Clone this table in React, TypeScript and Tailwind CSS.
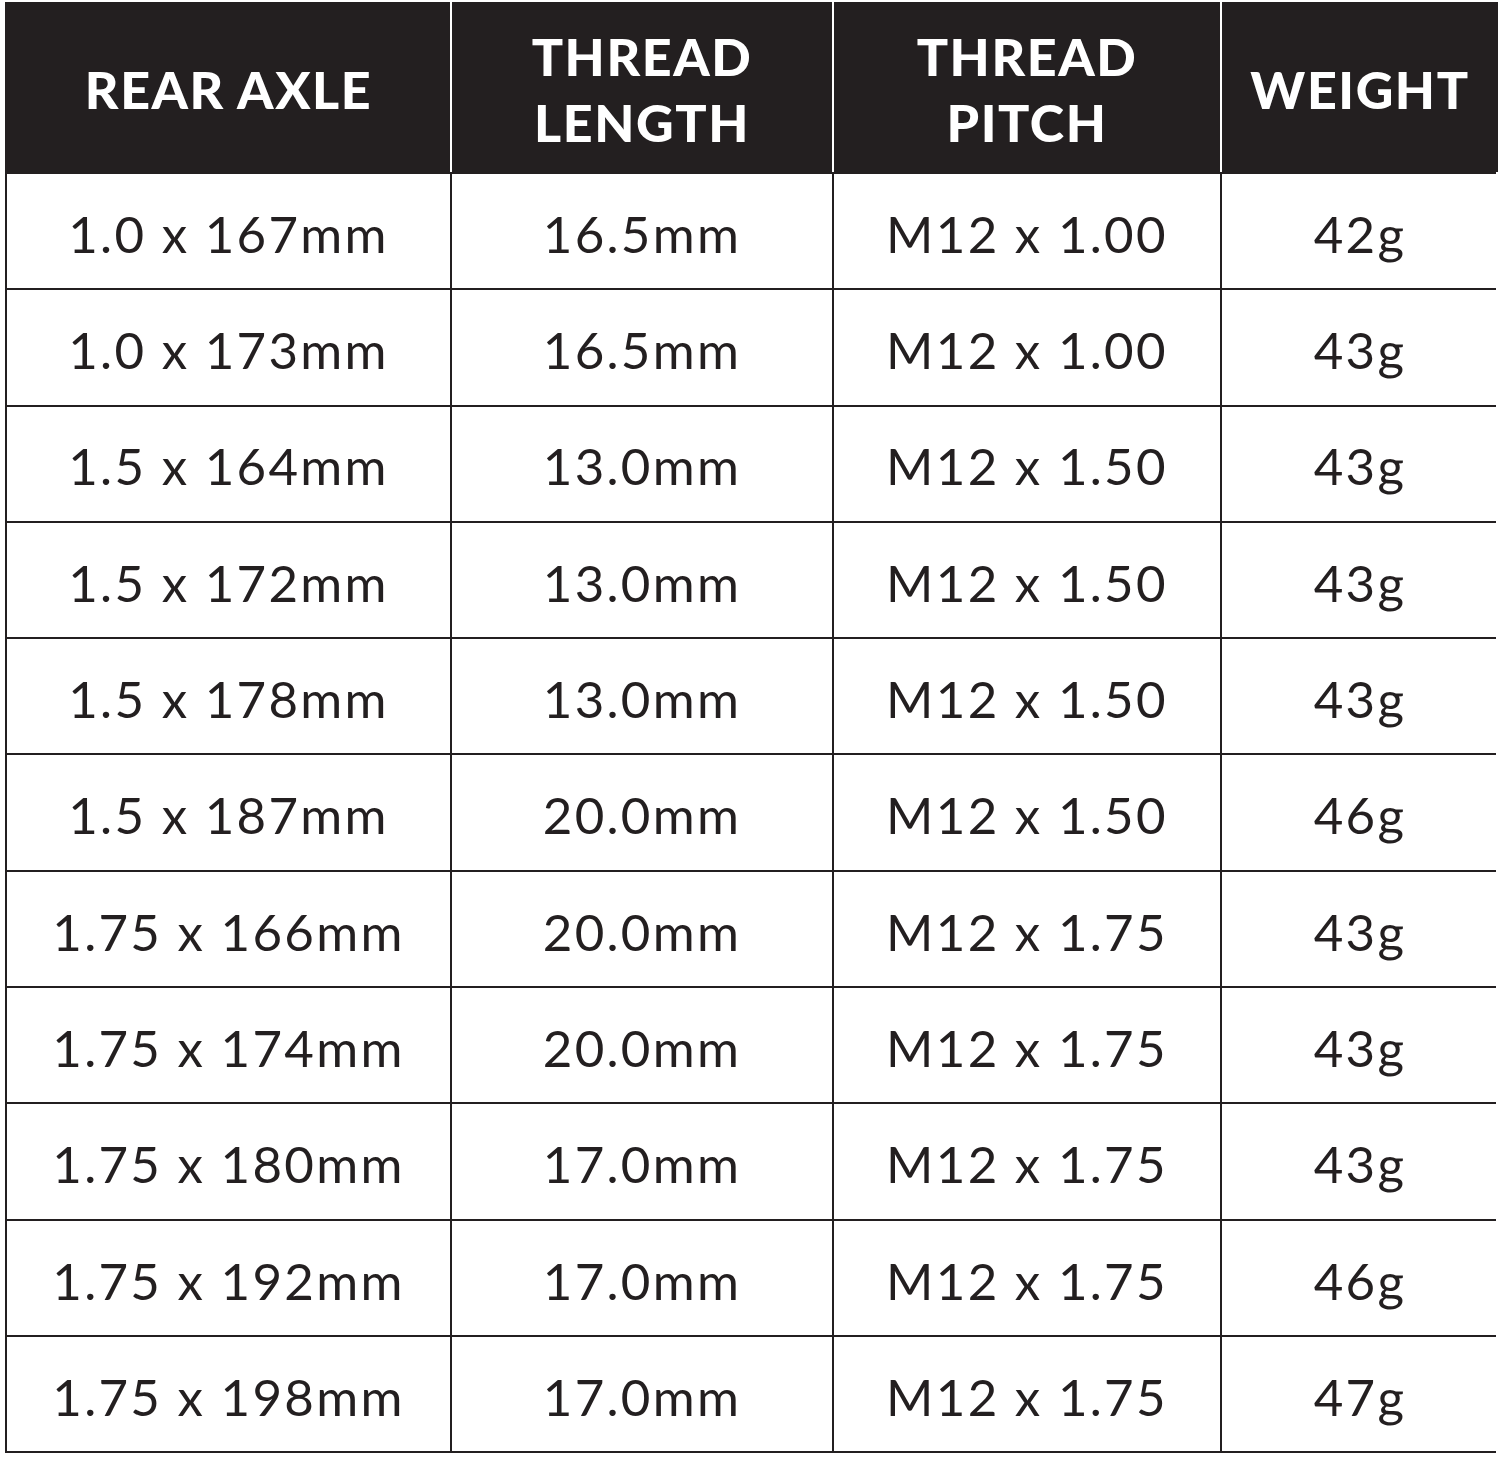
const rows = [
  ["1.0 x 167mm", "16.5mm", "M12 x 1.00", "42g"],
  ["1.0 x 173mm", "16.5mm", "M12 x 1.00", "43g"],
  ["1.5 x 164mm", "13.0mm", "M12 x 1.50", "43g"],
  ["1.5 x 172mm", "13.0mm", "M12 x 1.50", "43g"],
  ["1.5 x 178mm", "13.0mm", "M12 x 1.50", "43g"],
  ["1.5 x 187mm", "20.0mm", "M12 x 1.50", "46g"],
  ["1.75 x 166mm", "20.0mm", "M12 x 1.75", "43g"],
  ["1.75 x 174mm", "20.0mm", "M12 x 1.75", "43g"],
  ["1.75 x 180mm", "17.0mm", "M12 x 1.75", "43g"],
  ["1.75 x 192mm", "17.0mm", "M12 x 1.75", "46g"],
  ["1.75 x 198mm", "17.0mm", "M12 x 1.75", "47g"],
];

const headers = [["REAR AXLE"], ["THREAD", "LENGTH"], ["THREAD", "PITCH"], ["WEIGHT"]];

export default function App() {
  return (
    <div className="w-[1500px] h-[1458px] bg-white pt-[2px] pl-[5px] font-['Lato',sans-serif]">
      <div className="w-[1491px] border-2 border-t-0 border-[#231f20] bg-[#231f20]">
        {/* Header */}
        <div className="grid grid-cols-[443px_380px_386px_276px] gap-x-[2px] bg-white h-[170px]">
          {headers.map((lines, i) => (
            <div
              key={i}
              className="bg-[#231f20] flex flex-col items-center justify-center text-white font-black text-[52px] leading-[66px] tracking-[0.03em] pt-[4px]"
            >
              {lines.map((l) => (
                <span key={l}>{l}</span>
              ))}
            </div>
          ))}
        </div>

        {/* Body */}
        <div className="grid grid-cols-[443px_380px_386px_276px] gap-[2px] pt-[2px]">
          {rows.map((r, ri) =>
            r.map((c, ci) => (
              <div
                key={ri + "-" + ci}
                className="bg-white h-[114.3px] flex items-center justify-center text-[#231f20] text-[51px] tracking-[0.045em] pt-[6px]"
              >
                {c}
              </div>
            ))
          )}
        </div>
      </div>
    </div>
  );
}
